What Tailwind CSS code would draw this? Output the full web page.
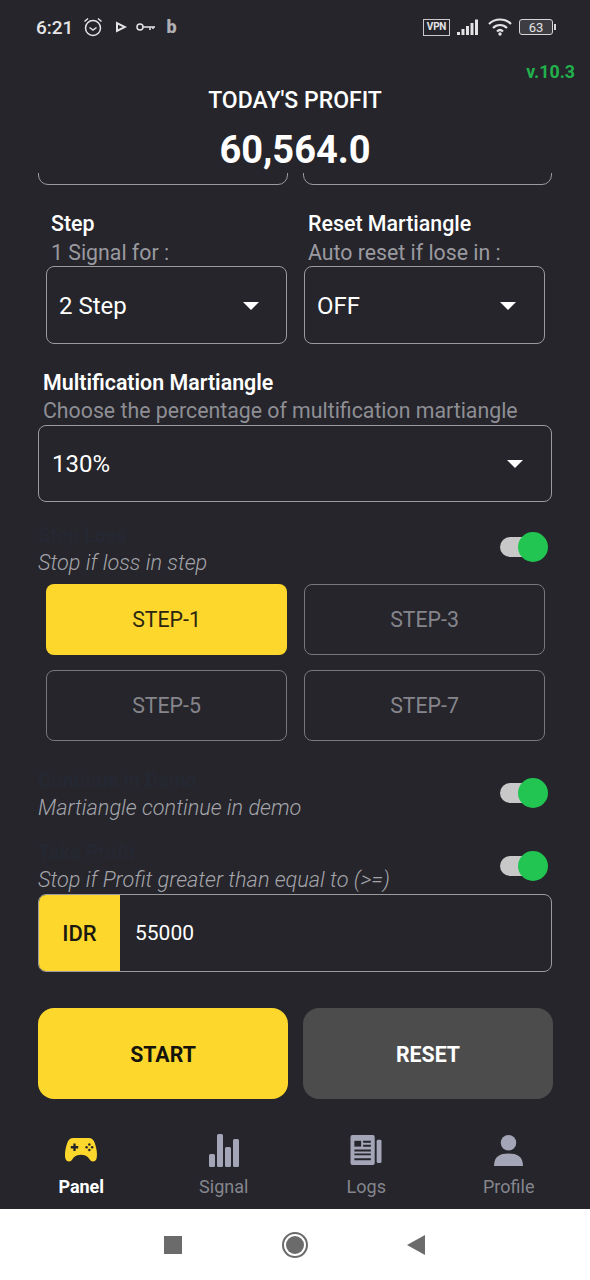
<!doctype html>
<html>
<head>
<meta charset="utf-8">
<script src="https://cdn.jsdelivr.net/npm/@tailwindcss/browser@4"></script>
</head>
<body class="m-0">
<div class="w-[590px] h-[1280px] flex flex-col overflow-hidden bg-[#25252b] text-white font-['Roboto',sans-serif]">
  <!-- status bar -->
  <div class="h-[54px] shrink-0 pl-[36px] pr-[34px] flex items-center justify-between text-[#e4e4e6]">
    <div class="flex items-center">
      <span class="text-[19px] font-medium leading-none">6:21</span>
      <svg class="ml-[10px]" width="20" height="20" viewBox="0 0 20 20" fill="none" stroke="currentColor" stroke-width="1.500"><circle cx="10" cy="11" r="7.500"/><path d="M6.500 10.500 10 13l3.500-2.500M1.500 4.500 5 1.500M18.500 4.500 15 1.500"/></svg>
      <svg class="ml-[12px]" width="12" height="12" viewBox="0 0 12 12" fill="none" stroke="currentColor" stroke-width="2"><path d="M2 2v8l8-4z"/></svg>
      <svg class="ml-[9px]" width="20" height="10" viewBox="0 0 20 10" fill="none" stroke="currentColor" stroke-width="1.500"><circle cx="4" cy="5" r="3"/><path d="M7 5h12M14 5v3M17 5v2"/></svg>
      <span class="ml-[10px] text-[18px] font-black leading-none text-[#b0b0b4]">b</span>
    </div>
    <div class="flex items-center">
      <div class="w-[27px] h-[17px] border-[1.5px] border-[#c9c9cc] flex items-center justify-center text-[10px] font-bold leading-none tracking-tight">VPN</div>
      <svg class="ml-[7px]" width="22" height="16" viewBox="0 0 22 16" fill="currentColor"><rect x="0" y="13" width="3" height="3"/><rect x="4.500" y="10" width="3" height="6"/><rect x="9" y="7" width="3" height="9"/><rect x="13.500" y="4" width="3" height="12"/><rect x="18" y="0.500" width="3" height="15.500"/></svg>
      <svg class="ml-[9px]" width="24" height="18" viewBox="0 0 24 18" fill="none" stroke="currentColor" stroke-width="2.200"><path d="M1 6c6-6 16-6 22 0M5 10c4-4 10-4 14 0M9 13.500c2-2 4-2 6 0"/><circle cx="12" cy="16" r="1.700" fill="currentColor" stroke="none"/></svg>
      <div class="ml-[7px] w-[34px] h-[16px] rounded-[3px] border-[1.5px] border-[#d5d5d8] flex items-center justify-center text-[13px] leading-none bg-[#55555a]/50">63</div>
      <div class="ml-[1px] w-[2px] h-[6px] bg-[#d5d5d8]"></div>
    </div>
  </div>

  <!-- header -->
  <div class="h-[119px] shrink-0 flex flex-col relative">
    <div class="absolute right-[15px] top-[8px] text-[17.8px] font-bold leading-[20px] text-[#22b14c]">v.10.3</div>
    <div class="mt-[33px] text-center text-[23px] font-medium leading-[28px]">TODAY'S PROFIT</div>
    <div class="mt-[13px] text-center text-[38px] font-bold leading-[44px]">60,564.0</div>
  </div>

  <!-- scroll area -->
  <div class="flex-1 overflow-hidden min-h-0">
    <div class="px-[38px] flex gap-[15px] -mt-[60px]">
      <div class="w-[250px] h-[72px] rounded-[10px] border border-[#9a9a9f]"></div>
      <div class="w-[250px] h-[72px] rounded-[10px] border border-[#9a9a9f]"></div>
    </div>

    <div class="mt-[24px] px-[46px] grid grid-cols-[241px_241px] gap-x-[17px]">
      <div>
        <div class="pl-[5px] text-[21.4px] font-medium leading-[30px]">Step</div>
        <div class="pl-[5px] text-[21.3px] leading-[27px] text-[#9a9aa0]">1 Signal for :</div>
        <div class="h-[78px] rounded-[8px] border border-[#9a9a9f] pl-[12px] pr-[27px] pt-[1px] flex items-center justify-between text-[24px]">
          <span>2 Step</span>
          <span class="w-0 h-0 border-x-[8px] border-x-transparent border-t-[8px] border-t-white"></span>
        </div>
      </div>
      <div>
        <div class="pl-[4px] text-[21.4px] font-medium leading-[30px]">Reset Martiangle</div>
        <div class="pl-[4px] text-[21.3px] leading-[27px] text-[#9a9aa0]">Auto reset if lose in :</div>
        <div class="h-[78px] rounded-[8px] border border-[#9a9a9f] pl-[12px] pr-[28px] pt-[1px] flex items-center justify-between text-[24px]">
          <span>OFF</span>
          <span class="w-0 h-0 border-x-[8px] border-x-transparent border-t-[8px] border-t-white"></span>
        </div>
      </div>
    </div>

    <div class="mt-[24px] px-[38px]">
      <div class="pl-[5px] text-[21.4px] font-semibold leading-[29px]">Multification Martiangle</div>
      <div class="pl-[5px] text-[21.3px] leading-[28px] text-[#8e8e94] whitespace-nowrap">Choose the percentage of multification martiangle</div>
      <div class="h-[77px] rounded-[8px] border border-[#9a9a9f] pl-[13px] pr-[28px] flex items-center justify-between text-[24px]">
        <span>130%</span>
        <span class="w-0 h-0 border-x-[8px] border-x-transparent border-t-[8px] border-t-white"></span>
      </div>
    </div>

    <div class="mt-[19px] px-[38px] flex justify-between items-start">
      <div>
        <div class="text-[20px] font-semibold leading-[28px] text-[#252833]">Stop Loss</div>
        <div class="text-[21.7px] italic font-light leading-[28px] text-[#a4a4aa]">Stop if loss in step</div>
      </div>
      <div class="mr-[4px] mt-[11px] w-[48px] h-[30px] relative">
        <div class="absolute left-0 top-[5px] w-[40px] h-[20px] rounded-full bg-[#c8c8c8]"></div>
        <div class="absolute right-0 top-0 w-[30px] h-[30px] rounded-full bg-[#22c552]"></div>
      </div>
    </div>

    <div class="mt-[7px] px-[46px] grid grid-cols-[241px_241px] gap-x-[17px] gap-y-[15px]">
      <div class="h-[71px] rounded-[8px] bg-[#fdd72c] pt-[1px] flex items-center justify-center text-[21.3px] text-[#2b2611]">STEP-1</div>
      <div class="h-[71px] rounded-[8px] border border-[#77777c] pt-[1px] flex items-center justify-center text-[21.3px] text-[#85858b]">STEP-3</div>
      <div class="h-[71px] rounded-[8px] border border-[#77777c] pt-[1px] flex items-center justify-center text-[21.3px] text-[#85858b]">STEP-5</div>
      <div class="h-[71px] rounded-[8px] border border-[#77777c] pt-[1px] flex items-center justify-center text-[21.3px] text-[#85858b]">STEP-7</div>
    </div>

    <div class="mt-[25px] px-[38px] flex justify-between items-start">
      <div>
        <div class="text-[20px] font-semibold leading-[28px] text-[#252833]">Continue in Demo</div>
        <div class="text-[21.7px] italic font-light leading-[28px] text-[#a4a4aa]">Martiangle continue in demo</div>
      </div>
      <div class="mr-[4px] mt-[12px] w-[48px] h-[30px] relative">
        <div class="absolute left-0 top-[5px] w-[40px] h-[20px] rounded-full bg-[#c8c8c8]"></div>
        <div class="absolute right-0 top-0 w-[30px] h-[30px] rounded-full bg-[#22c552]"></div>
      </div>
    </div>

    <div class="mt-[16px] px-[38px] flex justify-between items-start">
      <div>
        <div class="text-[20px] font-semibold leading-[28px] text-[#252833]">Take Profit</div>
        <div class="text-[21.7px] italic font-light leading-[28px] text-[#a4a4aa]">Stop if Profit greater than equal to (&gt;=)</div>
      </div>
      <div class="mr-[4px] mt-[13px] w-[48px] h-[30px] relative">
        <div class="absolute left-0 top-[5px] w-[40px] h-[20px] rounded-full bg-[#c8c8c8]"></div>
        <div class="absolute right-0 top-0 w-[30px] h-[30px] rounded-full bg-[#22c552]"></div>
      </div>
    </div>

    <div class="mx-[38px] h-[78px] rounded-[8px] border border-[#9a9a9f] flex overflow-hidden">
      <div class="w-[81px] bg-[#fdd72c] text-[#1c1a10] text-[22px] font-medium pt-[1px] flex items-center justify-center">IDR</div>
      <div class="pl-[15px] pt-[1px] flex items-center text-[21px]">55000</div>
    </div>

    <div class="mt-[36px] px-[38px] grid grid-cols-[250px_250px] gap-x-[15px]">
      <div class="h-[91px] rounded-[16px] bg-[#fdd72c] text-[#15140c] text-[21.3px] font-bold pt-[3px] flex items-center justify-center">START</div>
      <div class="h-[91px] rounded-[16px] bg-[#4c4c4c] text-white text-[21.3px] font-bold pt-[3px] flex items-center justify-center">RESET</div>
    </div>
  </div>

  <!-- bottom nav -->
  <div class="h-[100px] shrink-0 grid grid-cols-4 px-[10px] pt-[24px]">
    <div class="flex flex-col items-center">
      <div class="h-[34px] flex items-center"><svg width="34" height="26" viewBox="0 0 36 28"><path fill="#fdd72c" d="M10 1h16c4 0 6 2 7 6 2 6 3 13 1.500 17-1.500 3-4.500 3-6.500 1-2-3-4-6-10-6s-8 3-10 6c-2 2-5 2-6.500-1C0 20 1 13 3 7c1-4 3-6 7-6z"/><path d="M11 7v8M7 11h8" stroke="#25252b" stroke-width="2.500" fill="none"/><circle cx="27" cy="8" r="1.300" fill="#25252b"/><circle cx="27" cy="14" r="1.300" fill="#25252b"/><circle cx="24" cy="11" r="1.300" fill="#25252b"/><circle cx="30" cy="11" r="1.300" fill="#25252b"/></svg></div>
      <div class="mt-[8px] text-[18px] font-bold leading-[24px]">Panel</div>
    </div>
    <div class="flex flex-col items-center">
      <div class="h-[34px] flex items-center"><svg width="30" height="33" viewBox="0 0 30 33" fill="#a4a6b8"><rect x="0" y="20" width="6" height="13" rx="1.500"/><rect x="8" y="0" width="6" height="33" rx="1.500"/><rect x="16" y="13" width="6" height="20" rx="1.500"/><rect x="24" y="5" width="6" height="28" rx="1.500"/></svg></div>
      <div class="mt-[8px] text-[18px] leading-[24px] text-[#85858e]">Signal</div>
    </div>
    <div class="flex flex-col items-center">
      <div class="h-[34px] flex items-center"><svg width="32" height="31" viewBox="0 0 32 32"><rect x="0" y="0" width="25" height="31" rx="2" fill="#a4a6b8"/><rect x="27" y="5" width="5" height="24" rx="1.500" fill="#a4a6b8"/><rect x="4" y="6" width="7" height="6" fill="#25252b"/><path d="M13 7h8M13 11h8M4 16h17M4 20h17M4 25h17" stroke="#25252b" stroke-width="2"/></svg></div>
      <div class="mt-[8px] text-[18px] leading-[24px] text-[#85858e]">Logs</div>
    </div>
    <div class="flex flex-col items-center">
      <div class="h-[34px] flex items-center"><svg width="29" height="31" viewBox="0 0 30 32" fill="#a4a6b8"><circle cx="15" cy="8" r="8"/><path d="M0 32c0-10 6-13 15-13s15 3 15 13z"/></svg></div>
      <div class="mt-[8px] text-[18px] leading-[24px] text-[#85858e]">Profile</div>
    </div>
  </div>

  <!-- system nav -->
  <div class="h-[71px] shrink-0 bg-white grid grid-cols-3 items-center">
    <div class="flex justify-end"><div class="w-[18px] h-[18px] bg-[#6b6b6b] mr-[15px]"></div></div>
    <div class="flex justify-center"><div class="w-[26px] h-[26px] rounded-full border-[2px] border-[#6b6b6b] flex items-center justify-center"><div class="w-[18px] h-[18px] rounded-full bg-[#6b6b6b]"></div></div></div>
    <div class="flex justify-start"><svg class="ml-[14px]" width="18" height="20" viewBox="0 0 18 20"><path d="M18 0v20L0 10z" fill="#6b6b6b"/></svg></div>
  </div>
</div>
</body>
</html>
